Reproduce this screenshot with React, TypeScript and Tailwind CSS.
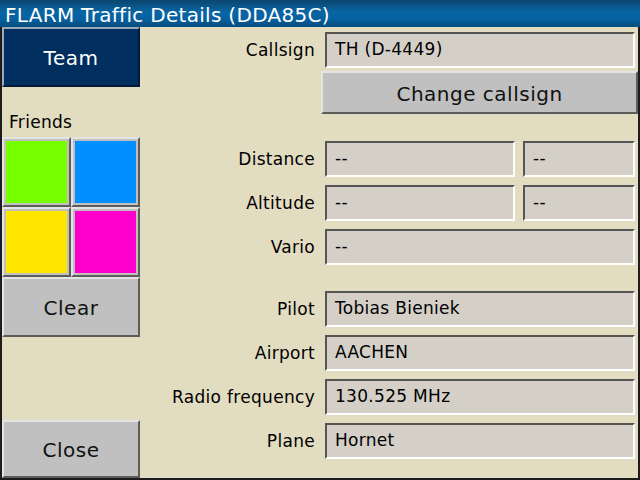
const font = { fontFamily: '"DejaVu Sans", "Liberation Sans", sans-serif' };

function Field({ value, className = "" }: { value: string; className?: string }) {
  return (
    <div
      className={`h-[36px] flex items-center pl-[8px] bg-[#d4d0c8] border-2 border-t-[#555555] border-l-[#555555] border-b-white border-r-white text-[17px] tracking-[0.3px] text-black whitespace-nowrap overflow-hidden ${className}`}
    >
      {value}
    </div>
  );
}

function Row({ label, children, className = "" }: { label: string; children: React.ReactNode; className?: string }) {
  return (
    <div className={`flex items-center ${className}`}>
      <div className="w-[185px] pr-[10px] pt-[2px] text-right text-[17px] tracking-[0.3px] text-black whitespace-nowrap">{label}</div>
      <div className="flex-1 flex gap-[8px] mr-[3px]">{children}</div>
    </div>
  );
}

function GrayButton({ label, className = "" }: { label: string; className?: string }) {
  return (
    <div
      className={`flex items-center justify-center pt-[2px] bg-[#c0c0c0] border-2 border-t-[#e4e4e4] border-l-[#e4e4e4] border-b-[#5c5c5c] border-r-[#5c5c5c] text-[20px] tracking-[0.5px] text-[#111111] ${className}`}
    >
      {label}
    </div>
  );
}

function ColorButton({ color }: { color: string }) {
  return (
    <div className="h-[70px] bg-[#c0c0c0] border-2 border-t-[#e4e4e4] border-l-[#e4e4e4] border-b-[#5c5c5c] border-r-[#5c5c5c] p-[2px]">
      <div className="w-full h-full" style={{ backgroundColor: color }} />
    </div>
  );
}

export default function App() {
  return (
    <div className="w-[640px] h-[480px] flex flex-col bg-[#e2dcc0] overflow-hidden" style={font}>
      <div className="h-[27px] pt-[4px] pl-[5px] leading-[23px] text-[20px] tracking-[0.3px] text-white bg-[linear-gradient(to_bottom,#0b4570_0%,#0866a4_45%,#0760a0_70%,#044d7c_100%)] whitespace-nowrap">
        FLARM Traffic Details (DDA85C)
      </div>

      <div className="flex-1 flex border-l-2 border-r-2 border-b-2 border-[#1c1c1c]">
        {/* left column */}
        <div className="w-[138px] flex flex-col">
          <div className="h-[60px] flex items-center justify-center pt-[2px] bg-[#002e5e] border-2 border-t-[#9aaabb] border-l-[#9aaabb] border-b-[#001a38] border-r-[#001a38] text-[20px] tracking-[0.5px] text-white">
            Team
          </div>
          <div className="h-[50px] pt-[25px] pl-[7px] leading-[20px] text-[17px] tracking-[0.3px] text-black">Friends</div>
          <div className="grid grid-cols-2">
            <ColorButton color="#77ff00" />
            <ColorButton color="#0090ff" />
            <ColorButton color="#ffe600" />
            <ColorButton color="#ff00cc" />
          </div>
          <GrayButton label="Clear" className="h-[60px]" />
          <div className="flex-1" />
          <GrayButton label="Close" className="h-[58px]" />
        </div>

        {/* right column */}
        <div className="flex-1 flex flex-col pt-[5px]">
          <Row label="Callsign">
            <Field value="TH (D-4449)" className="flex-1" />
          </Row>
          <GrayButton label="Change callsign" className="h-[43px] mt-[3px] ml-[181px]" />

          <Row label="Distance" className="mt-[27px]">
            <Field value="--" className="w-[190px]" />
            <Field value="--" className="flex-1" />
          </Row>
          <Row label="Altitude" className="mt-[8px]">
            <Field value="--" className="w-[190px]" />
            <Field value="--" className="flex-1" />
          </Row>
          <Row label="Vario" className="mt-[8px]">
            <Field value="--" className="flex-1" />
          </Row>

          <Row label="Pilot" className="mt-[26px]">
            <Field value="Tobias Bieniek" className="flex-1" />
          </Row>
          <Row label="Airport" className="mt-[8px]">
            <Field value="AACHEN" className="flex-1" />
          </Row>
          <Row label="Radio frequency" className="mt-[8px]">
            <Field value="130.525 MHz" className="flex-1" />
          </Row>
          <Row label="Plane" className="mt-[8px]">
            <Field value="Hornet" className="flex-1" />
          </Row>
        </div>
      </div>
    </div>
  );
}
